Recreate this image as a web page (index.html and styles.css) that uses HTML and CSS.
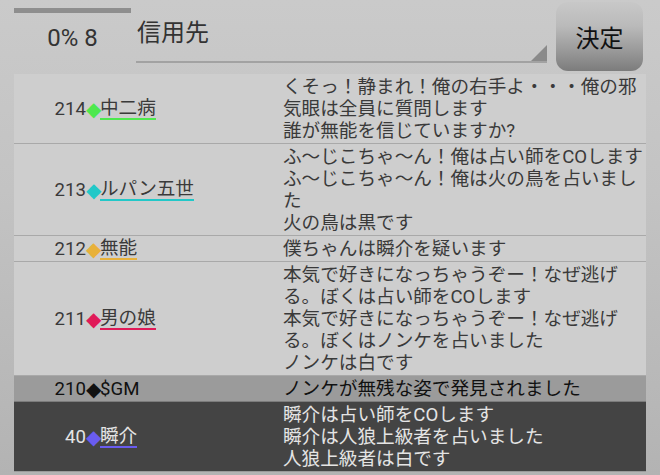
FILE: index.html
```html
<!DOCTYPE html>
<html lang="ja">
<head>
<meta charset="utf-8">
<title>信用先</title>
<link rel="stylesheet" href="styles.css">
</head>
<body>
<div class="screen">
  <header class="top">
    <div class="progress">
      <div class="bar"></div>
      <div class="count">0% 8</div>
    </div>
    <div class="spinner">
      <span class="spinner-text">信用先</span>
      <span class="tri"></span>
    </div>
    <button class="decide">決定</button>
  </header>
  <div class="list">
    <div class="row">
      <div class="who"><span class="num">214</span><span class="dia c-green">◆</span><span class="name u-green">中二病</span></div>
      <div class="msg">くそっ！静まれ！俺の右手よ・・・俺の邪気眼は全員に質問します<br>誰が無能を信じていますか?</div>
    </div>
    <div class="row">
      <div class="who"><span class="num">213</span><span class="dia c-cyan">◆</span><span class="name u-cyan">ルパン五世</span></div>
      <div class="msg">ふ〜じこちゃ〜ん！俺は占い師をCOします<br>ふ〜じこちゃ〜ん！俺は火の鳥を占いました<br>火の鳥は黒です</div>
    </div>
    <div class="row">
      <div class="who"><span class="num">212</span><span class="dia c-gold">◆</span><span class="name u-gold">無能</span></div>
      <div class="msg">僕ちゃんは瞬介を疑います</div>
    </div>
    <div class="row">
      <div class="who"><span class="num">211</span><span class="dia c-red">◆</span><span class="name u-red">男の娘</span></div>
      <div class="msg">本気で好きになっちゃうぞー！なぜ逃げる。ぼくは占い師をCOします<br>本気で好きになっちゃうぞー！なぜ逃げる。ぼくはノンケを占いました<br>ノンケは白です</div>
    </div>
    <div class="row row-gm">
      <div class="who"><span class="num">210</span><span class="dia c-black">◆</span><span class="gm">$GM</span></div>
      <div class="msg">ノンケが無残な姿で発見されました</div>
    </div>
    <div class="row row-self">
      <div class="who"><span class="num">40</span><span class="dia c-violet">◆</span><span class="name u-violet">瞬介</span></div>
      <div class="msg">瞬介は占い師をCOします<br>瞬介は人狼上級者を占いました<br>人狼上級者は白です</div>
    </div>
  </div>
</div>
</body>
</html>
```
FILE: styles.css
```css
html, body {
  margin: 0;
  padding: 0;
}
body {
  width: 660px;
  height: 475px;
  overflow: hidden;
  background: linear-gradient(to bottom, #cacaca 0%, #c3c3c3 40%, #b3b3b3 100%);
  font-family: Roboto, "Noto Sans CJK JP", sans-serif;
  color: #3a3a3a;
}
.screen {
  padding: 0 14px;
}
.top {
  display: flex;
  height: 74px;
}
.progress {
  width: 117px;
  display: flex;
  flex-direction: column;
  align-items: center;
}
.bar {
  align-self: stretch;
  height: 5px;
  margin-top: 8px;
  background: #8e8e8e;
}
.count {
  margin-top: 11px;
  font-size: 24px;
  line-height: 28px;
  color: #333;
}
.spinner {
  margin-left: 5px;
  width: 411px;
  height: 61px;
  display: flex;
  border-bottom: 2px solid #a2a2a2;
}
.spinner-text {
  flex: 1;
  margin-top: 19px;
  padding-left: 1px;
  font-size: 24px;
  line-height: 28px;
  color: #333;
}
.tri {
  align-self: flex-end;
  width: 0;
  height: 0;
  border-left: 16px solid transparent;
  border-bottom: 16px solid #8a8a8a;
}
.decide {
  margin: 2px 0 3px 9px;
  width: 87px;
  padding: 0;
  border: none;
  border-radius: 12px;
  background: linear-gradient(to bottom, #c8c8c8 0%, #bababa 35%, #9a9a9a 70%, #7c7c7c 100%);
  font-family: Roboto, "Noto Sans CJK JP", sans-serif;
  font-size: 24px;
  color: #111;
}
.list {
  background: #cecece;
}
.row {
  display: grid;
  grid-template-columns: 269px 363px;
  padding: 2px 0 1px;
  border-bottom: 1px solid #a9a9a9;
  font-size: 18.62px;
  line-height: 22px;
  color: #3a3a3a;
}
.who {
  display: flex;
  align-items: center;
}
.num {
  width: 72px;
  text-align: right;
}
.dia {
  width: 14px;
  text-align: center;
  font-family: "DejaVu Sans", sans-serif;
  font-size: 20px;
  line-height: 22px;
}
.name {
  display: inline-block;
  line-height: 19px;
  border-bottom: 2px solid transparent;
}
.gm {
  color: #111;
}
.c-green { color: #4ee84e; }
.c-cyan { color: #22c8c8; }
.c-gold { color: #e8b13a; }
.c-red { color: #e01a58; }
.c-black { color: #111; }
.c-violet { color: #6a5cf0; }
.u-green { border-bottom-color: #4ee84e; }
.u-cyan { border-bottom-color: #22c8c8; }
.u-gold { border-bottom-color: #e8b13a; }
.u-red { border-bottom-color: #e01a58; }
.u-violet { border-bottom-color: #6a5cf0; }
.row-gm {
  background: #9b9b9b;
  color: #111;
  border-bottom-color: #7c7c7c;
}
.row-self {
  background: #444444;
  color: #e4e4e4;
  border-bottom-color: #9a9a9a;
}
```
